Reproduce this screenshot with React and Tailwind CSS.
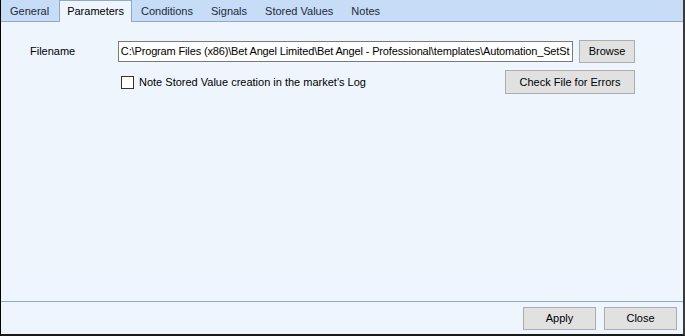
const tabs = ["General", "Parameters", "Conditions", "Signals", "Stored Values", "Notes"];

const Button = ({ children, className = "" }) => (
  <button
    className={`bg-[#e1e1e1] border border-[#adadad] text-black flex items-center justify-center ${className}`}
  >
    {children}
  </button>
);

export default function App() {
  const active = "Parameters";

  return (
    <div
      className="w-[685px] h-[336px] bg-[#eef5fd] flex flex-col border-l border-b-2 border-r-2 border-l-black border-b-[#1a1a1a] border-r-[#3a3a3a] text-[11px] text-black overflow-hidden"
      style={{ fontFamily: '"Liberation Sans", Arial, sans-serif' }}
    >
      {/* Tab strip */}
      <div className="h-[22px] bg-[#c6dcf7] border-b border-[#8fa9c9] flex items-end shrink-0">
        {tabs.map((t) =>
          t === active ? (
            <div
              key={t}
              className="h-[22px] -mb-[1px] px-[7px] ml-[1px] bg-[#eef5fd] border-x border-t border-[#8fa9c9] flex items-center leading-none"
            >
              {t}
            </div>
          ) : (
            <div key={t} className="h-[20px] px-[9px] flex items-center leading-none text-[#1e2a3a]">
              {t}
            </div>
          )
        )}
      </div>

      {/* Panel */}
      <div className="flex-1 border-b border-[#8fa9c9] pt-[18px] pr-[48px]">
        <div className="flex items-center">
          <div className="w-[117px] pl-[29px]">Filename</div>
          <div className="w-[456px] h-[21px] bg-white border border-[#7a7a7a] flex items-center pl-[2px] overflow-hidden whitespace-nowrap tracking-[-0.15px]">
            C:\Program Files (x86)\Bet Angel Limited\Bet Angel - Professional\templates\Automation_SetSt
          </div>
          <Button className="ml-[6px] w-[56px] h-[23px]">Browse</Button>
        </div>
        <div className="flex items-center mt-[7px]">
          <div className="w-[120px]" />
          <div className="w-[13px] h-[13px] bg-white border border-[#333]" />
          <div className="ml-[5px] flex-1">Note Stored Value creation in the market's Log</div>
          <Button className="w-[130px] h-[24px]">Check File for Errors</Button>
        </div>
      </div>

      {/* Footer */}
      <div className="h-[32px] flex items-center justify-end gap-[8px] pr-[6px] shrink-0">
        <Button className="w-[73px] h-[23px]">Apply</Button>
        <Button className="w-[73px] h-[23px]">Close</Button>
      </div>
    </div>
  );
}
